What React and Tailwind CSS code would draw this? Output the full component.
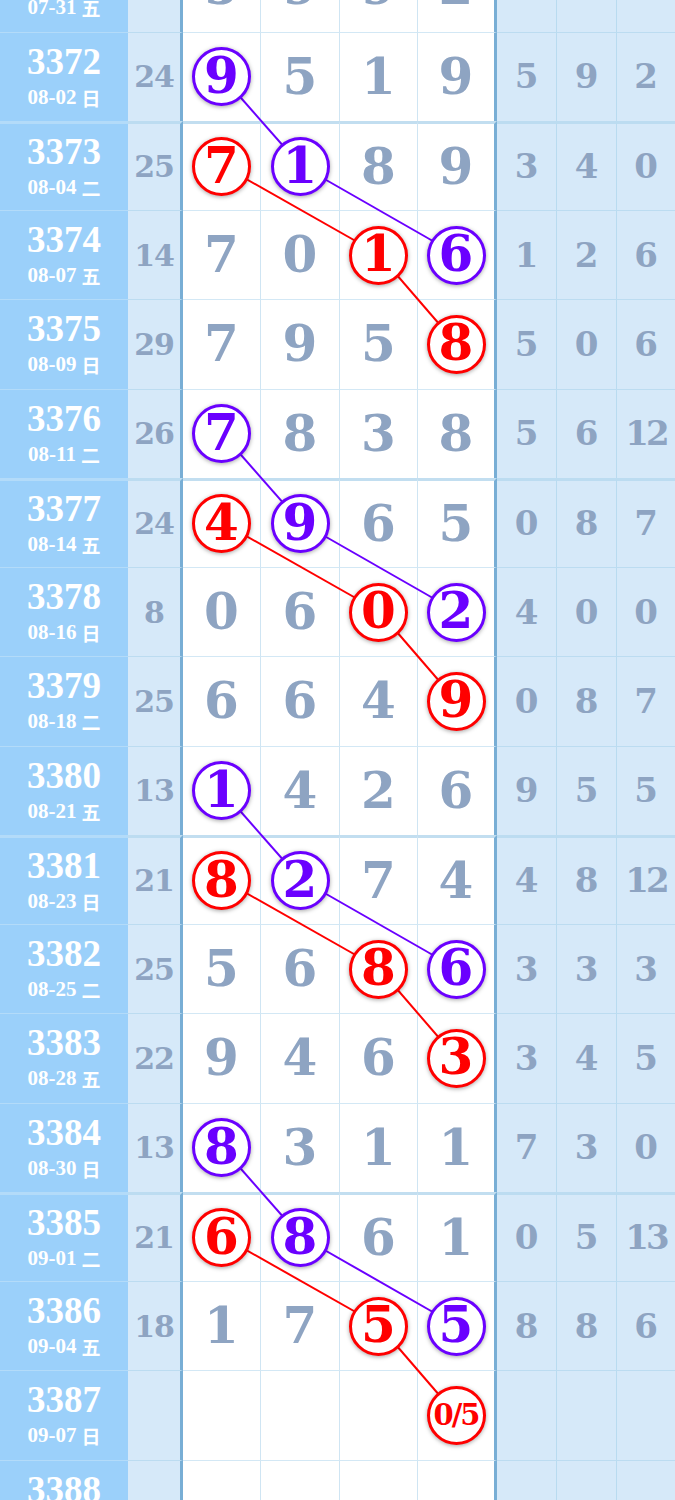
import React from "react";

const ROW_H = 89.25;

const rows = [
  { n: "3371", d: "07-31", w: "五", s: "", g: [5, 9, 9, 2], r: [3, 9, ""] },
  { n: "3372", d: "08-02", w: "日", s: "24", g: [9, 5, 1, 9], r: [5, 9, 2] },
  { n: "3373", d: "08-04", w: "二", s: "25", g: [7, 1, 8, 9], r: [3, 4, 0] },
  { n: "3374", d: "08-07", w: "五", s: "14", g: [7, 0, 1, 6], r: [1, 2, 6] },
  { n: "3375", d: "08-09", w: "日", s: "29", g: [7, 9, 5, 8], r: [5, 0, 6] },
  { n: "3376", d: "08-11", w: "二", s: "26", g: [7, 8, 3, 8], r: [5, 6, 12] },
  { n: "3377", d: "08-14", w: "五", s: "24", g: [4, 9, 6, 5], r: [0, 8, 7] },
  { n: "3378", d: "08-16", w: "日", s: "8", g: [0, 6, 0, 2], r: [4, 0, 0] },
  { n: "3379", d: "08-18", w: "二", s: "25", g: [6, 6, 4, 9], r: [0, 8, 7] },
  { n: "3380", d: "08-21", w: "五", s: "13", g: [1, 4, 2, 6], r: [9, 5, 5] },
  { n: "3381", d: "08-23", w: "日", s: "21", g: [8, 2, 7, 4], r: [4, 8, 12] },
  { n: "3382", d: "08-25", w: "二", s: "25", g: [5, 6, 8, 6], r: [3, 3, 3] },
  { n: "3383", d: "08-28", w: "五", s: "22", g: [9, 4, 6, 3], r: [3, 4, 5] },
  { n: "3384", d: "08-30", w: "日", s: "13", g: [8, 3, 1, 1], r: [7, 3, 0] },
  { n: "3385", d: "09-01", w: "二", s: "21", g: [6, 8, 6, 1], r: [0, 5, 13] },
  { n: "3386", d: "09-04", w: "五", s: "18", g: [1, 7, 5, 5], r: [8, 8, 6] },
  { n: "3387", d: "09-07", w: "日", s: "", g: ["", "", "", "0/5"], r: ["", "", ""] },
  { n: "3388", d: "09-09", w: "二", s: "", g: ["", "", "", ""], r: ["", "", ""] },
];

const colX = [221.5, 300, 379, 456];
const PURPLE = "#6a00ff";
const RED = "#ff0000";

// every group of four draws one purple and one red chain
const chains = [];
for (let k = 0; k < 4; k++) {
  const b = 1 + 4 * k;
  chains.push({ color: PURPLE, pts: [[b, 0], [b + 1, 1], [b + 2, 3]] });
  chains.push({ color: RED, pts: [[b + 1, 0], [b + 2, 2], [b + 3, 3]] });
}

const marks = {};
chains.forEach((ch) =>
  ch.pts.forEach(([r, c]) => {
    marks[r + "-" + c] = ch.color;
  })
);

const cy = (i) => i * ROW_H + 44.5;

function Circle({ color, value }) {
  const small = String(value).length > 1;
  return (
    <div
      className="relative z-10 w-[59px] h-[59px] rounded-full border-[3px] bg-white flex items-center justify-center shadow-[0_1px_4px_rgba(0,0,0,0.35)]"
      style={{ borderColor: color, color }}
    >
      <span
        className={
          small
            ? "font-['DejaVu_Serif',serif] font-bold text-[29px] leading-none tracking-[-2px]"
            : "font-['DejaVu_Serif',serif] font-bold text-[50px] leading-none -mt-[2px]"
        }
      >
        {value}
      </span>
    </div>
  );
}

function Row({ row, i }) {
  const num = parseInt(row.n, 10);
  const thick = (num - 3373) % 4 === 0;
  const bt = thick ? "border-t-[3px]" : "border-t";
  return (
    <div className="flex h-[89.25px]">
      <div
        className={`w-[128px] shrink-0 bg-[#9bd0fa] ${bt} border-[#b3dbf9] flex flex-col items-center justify-center text-white`}
      >
        <div className="font-['Liberation_Serif',serif] font-bold text-[37px] leading-none -mt-[3px]">
          {row.n}
        </div>
        <div className="font-['Liberation_Serif',serif] font-bold text-[21px] leading-none mt-[7px] flex items-center">
          {row.d}
          <span className="ml-[5px] font-['Noto_Sans_CJK_SC',sans-serif] text-[19px] font-bold">
            {row.w}
          </span>
        </div>
      </div>
      <div
        className={`w-[55px] shrink-0 bg-[#d6e9f9] ${bt} border-t-[#bcdcf1] border-r-[3px] border-r-[#78aed5] flex items-center justify-center font-['DejaVu_Serif',serif] font-bold text-[30px] tracking-[-1px] text-[#8ea4c2]`}
      >
        {row.s}
      </div>
      {row.g.map((v, c) => {
        const color = marks[i + "-" + c] || (v === "0/5" ? RED : null);
        const w = c === 0 ? "w-[78px]" : c === 1 ? "w-[79px]" : c === 2 ? "w-[78px]" : "w-[79px]";
        const br = c === 3 ? "border-r-[3px] border-r-[#78aed5]" : "border-r border-r-[#cfe5f3]";
        return (
          <div
            key={c}
            className={`${w} shrink-0 bg-white ${bt} ${thick ? "border-t-[#c2def0]" : "border-t-[#d3e8f5]"} ${br} flex items-center justify-center font-['DejaVu_Serif',serif] font-bold text-[50px] leading-none text-[#8ea4c2]`}
          >
            {color ? <Circle color={color} value={v} /> : v}
          </div>
        );
      })}
      {row.r.map((v, c) => (
        <div
          key={c}
          className={`${c === 2 ? "flex-1" : "w-[60px] border-r border-r-[#b9dbf0]"} shrink-0 bg-[#d6e9f9] ${bt} border-t-[#bcdcf1] flex items-center justify-center font-['DejaVu_Serif',serif] font-bold text-[34px] text-[#8ea4c2] ${String(v).length > 1 ? "tracking-[-3px]" : ""}`}
        >
          {v}
        </div>
      ))}
    </div>
  );
}

export default function App() {
  return (
    <div className="w-[675px] h-[1500px] overflow-hidden bg-white">
      <div className="relative -mt-[57.75px]">
        {rows.map((row, i) => (
          <Row key={row.n} row={row} i={i} />
        ))}
        <svg
          className="absolute left-0 top-0 pointer-events-none"
          width="675"
          height={rows.length * ROW_H}
        >
          {chains.map((ch, k) =>
            ch.pts.slice(1).map(([r, c], j) => {
              const [r0, c0] = ch.pts[j];
              return (
                <line
                  key={k + "-" + j}
                  x1={colX[c0]}
                  y1={cy(r0)}
                  x2={colX[c]}
                  y2={cy(r)}
                  stroke={ch.color}
                  strokeWidth="2"
                />
              );
            })
          )}
        </svg>
      </div>
    </div>
  );
}
